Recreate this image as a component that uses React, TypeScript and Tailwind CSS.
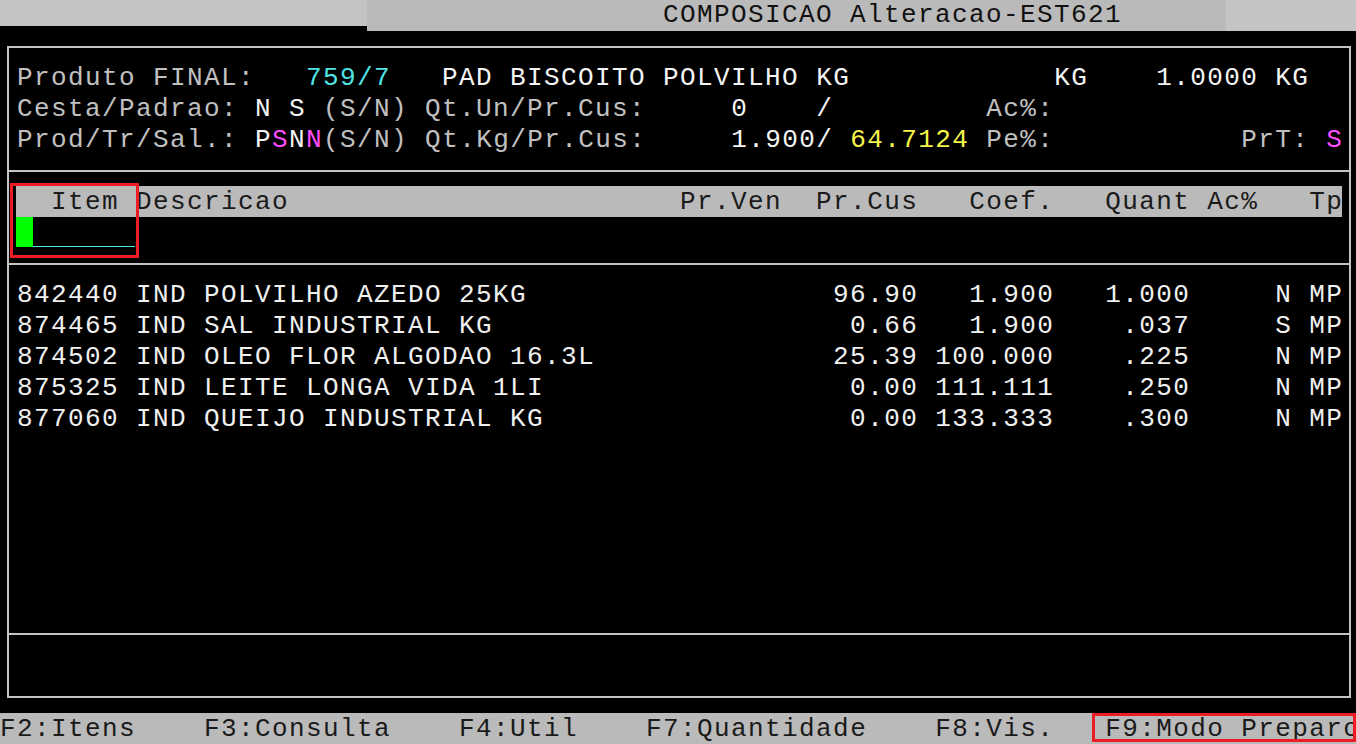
const tone = {
  g: "text-[#c0c0c0]",
  w: "text-[#f4f4f4]",
  c: "text-[#4fe3e3]",
  y: "text-[#f5f54a]",
  m: "text-[#ff4dff]",
}

type Seg = [string, keyof typeof tone]

const headerLines: Seg[][] = [
  [
    ["Produto FINAL:   ", "g"],
    ["759/7", "c"],
    ["   PAD BISCOITO POLVILHO KG            KG    1.0000 KG", "w"],
  ],
  [
    ["Cesta/Padrao: ", "g"],
    ["N S", "w"],
    [" (S/N) Qt.Un/Pr.Cus:", "g"],
    ["     0    /", "w"],
    ["         Ac%:", "g"],
  ],
  [
    ["Prod/Tr/Sal.: ", "g"],
    ["P", "w"],
    ["S", "m"],
    ["N", "w"],
    ["N", "m"],
    ["(S/N) Qt.Kg/Pr.Cus:", "g"],
    ["     1.900/ ", "w"],
    ["64.7124", "y"],
    [" Pe%:           PrT: ", "g"],
    ["S", "m"],
  ],
]

const items = [
  { code: "842440", desc: "IND POLVILHO AZEDO 25KG", cus: "96.90", coef: "1.900", qt: "1.000", ac: "N" },
  { code: "874465", desc: "IND SAL INDUSTRIAL KG", cus: "0.66", coef: "1.900", qt: ".037", ac: "S" },
  { code: "874502", desc: "IND OLEO FLOR ALGODAO 16.3L", cus: "25.39", coef: "100.000", qt: ".225", ac: "N" },
  { code: "875325", desc: "IND LEITE LONGA VIDA 1LI", cus: "0.00", coef: "111.111", qt: ".250", ac: "N" },
  { code: "877060", desc: "IND QUEIJO INDUSTRIAL KG", cus: "0.00", coef: "133.333", qt: ".300", ac: "N" },
]

const columns =
  "  Item Descricao".padEnd(39) + "Pr.Ven  Pr.Cus   Coef.   Quant Ac%   Tp"

const keys =
  "F2:Itens".padEnd(12) +
  "F3:Consulta".padEnd(15) +
  "F4:Util".padEnd(11) +
  "F7:Quantidade".padEnd(17) +
  "F8:Vis.".padEnd(10) +
  "F9:Modo Preparo"

function Row({ children, className = "" }: { children: React.ReactNode; className?: string }) {
  return <div className={`h-[31px] leading-[32px] whitespace-pre overflow-hidden ${className}`}>{children}</div>
}

export default function App() {
  return (
    <div className="relative w-[1356px] h-[744px] overflow-hidden bg-black flex flex-col font-['Liberation_Mono',monospace] text-[26px] tracking-[1.4px]">
      {/* title bar */}
      <div className="flex items-start h-[31px]">
        <div className="w-[367px] h-[26px] bg-[#c4c4c4]" />
        <div className="flex-1 h-[31px] bg-[#bababa] pl-[296px] leading-[31px] whitespace-pre text-[#111]">
          COMPOSICAO Alteracao-EST621
        </div>
        <div className="w-[130px] h-[31px] bg-[#c4c4c4]" />
      </div>

      {/* main frame */}
      <div className="mt-[15px] ml-[7px] w-[1344px] h-[652px] border-2 border-[#c4c4c4] flex flex-col">
        <div className="pt-[14px] pb-[15px] pl-[8px] border-b-2 border-[#c4c4c4]">
          {headerLines.map((line, i) => (
            <Row key={i}>
              {line.map(([text, c], j) => (
                <span key={j} className={tone[c]}>
                  {text}
                </span>
              ))}
            </Row>
          ))}
        </div>

        <div className="pt-[14px] pb-[15px] border-b-2 border-[#c4c4c4]">
          <Row className="ml-[7px] w-[1326px] pl-px bg-[#bababa] text-[#1a1a1a]">{columns}</Row>
          <div className="h-[31px] flex pl-[7px]">
            <div className="w-[17px] h-[30px] bg-[#00ff00]" />
            <div className="w-[102px] h-[30px] border-b border-[#4fe3e3]" />
          </div>
        </div>

        <div className="h-[370px] pt-[14px] pl-[8px] border-b-2 border-[#c4c4c4] text-[#f0f0f0]">
          {items.map((it) => (
            <Row key={it.code}>
              {(it.code + " " + it.desc).padEnd(45) +
                it.cus.padStart(8) +
                it.coef.padStart(8) +
                it.qt.padStart(8) +
                "     " +
                it.ac +
                " MP"}
            </Row>
          ))}
        </div>

        <div className="flex-1" />
      </div>

      {/* function keys */}
      <div className="mt-[15px] h-[31px] bg-[#bababa]">
        <Row className="text-[#1a1a1a]">{keys}</Row>
      </div>

      {/* highlight marks */}
      <div className="absolute left-[10px] top-[183px] w-[129px] h-[75px] border-[3px] border-[#ed1c24]" />
      <div className="absolute left-[1092px] top-[713px] w-[264px] h-[29px] border-[3px] border-[#ed1c24]" />
    </div>
  )
}
